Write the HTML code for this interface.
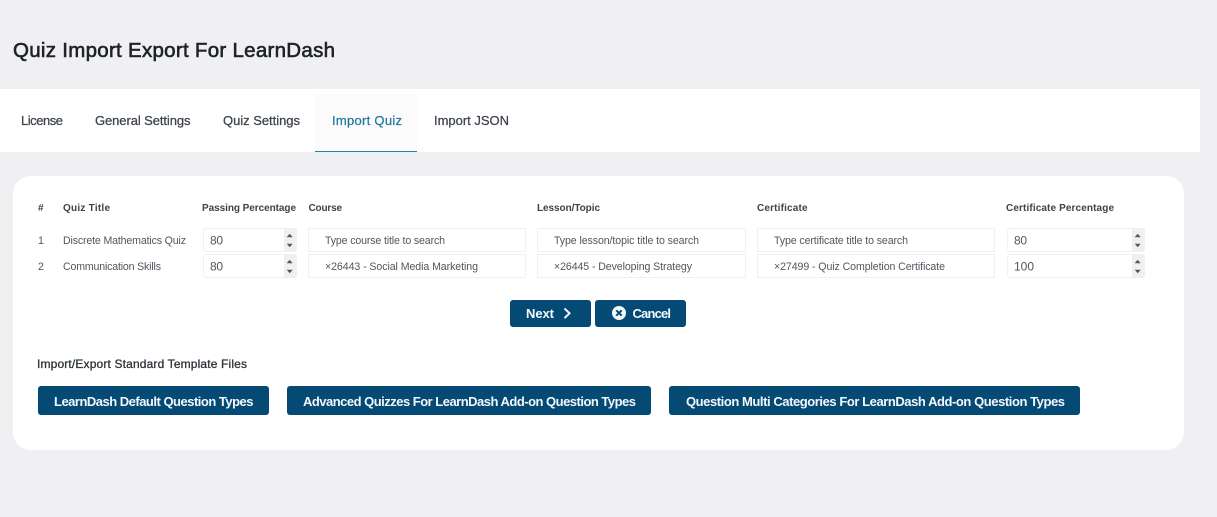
<!DOCTYPE html>
<html><head><meta charset="utf-8"><title>Quiz Import Export For LearnDash</title>
<style>
html,body{margin:0;padding:0;background:#f0f0f2;width:1217px;height:517px;overflow:hidden}
svg{display:block}
text{font-family:"Liberation Sans",sans-serif;white-space:pre}
.tab{font-size:13px;fill:#3c434a;stroke:#3c434a;stroke-width:.25}
.th{font-size:10px;font-weight:bold;fill:#3c434a}
.td{font-size:10.6px;fill:#50575e}
.num{font-size:12px;fill:#50575e}
.box{fill:#fff;stroke:#f0f0f2;stroke-width:1}
.spin{fill:#f0f0f2}
.ar{fill:#50575e}
.btn{fill:#044a75}
.bt{font-size:13px;font-weight:bold;fill:#f4f8fb}
</style></head><body>
<svg width="1217" height="517" viewBox="0 0 1217 517" xmlns="http://www.w3.org/2000/svg">
<rect width="1217" height="517" fill="#f0f0f2"/>
<text x="13" y="57" font-size="20.5" fill="#1d2327" stroke="#1d2327" stroke-width=".6" textLength="322" lengthAdjust="spacing">Quiz Import Export For LearnDash</text>

<rect x="0" y="89" width="1200" height="63" fill="#fff"/>
<rect x="315" y="94" width="102" height="58" fill="#fbfbfb"/>
<rect x="315" y="151" width="102" height="1" fill="#2a7fa8"/>
<text class="tab" x="21" y="125" textLength="42" lengthAdjust="spacing">License</text>
<text class="tab" x="95" y="125" textLength="95.500" lengthAdjust="spacing">General Settings</text>
<text class="tab" x="223" y="125" textLength="77" lengthAdjust="spacing">Quiz Settings</text>
<text class="tab" x="332" y="125" textLength="70" lengthAdjust="spacing" style="fill:#2278a3;stroke:#2278a3">Import Quiz</text>
<text class="tab" x="434" y="125" textLength="75" lengthAdjust="spacing">Import JSON</text>

<rect x="13" y="176" width="1171" height="274" rx="18" fill="#fff"/>

<text class="th" x="38" y="211" textLength="5.500" lengthAdjust="spacing">#</text>
<text class="th" x="63" y="211" textLength="47" lengthAdjust="spacing">Quiz Title</text>
<text class="th" x="202" y="211" textLength="94" lengthAdjust="spacing">Passing Percentage</text>
<text class="th" x="308.500" y="211" textLength="33.500" lengthAdjust="spacing">Course</text>
<text class="th" x="537" y="211" textLength="63" lengthAdjust="spacing">Lesson/Topic</text>
<text class="th" x="757" y="211" textLength="50.500" lengthAdjust="spacing">Certificate</text>
<text class="th" x="1006" y="211" textLength="108" lengthAdjust="spacing">Certificate Percentage</text>

<text class="td" x="38" y="244">1</text>
<text class="td" x="38" y="270">2</text>
<text class="td" x="63" y="244" textLength="123" lengthAdjust="spacing">Discrete Mathematics Quiz</text>
<text class="td" x="63" y="270" textLength="98" lengthAdjust="spacing">Communication Skills</text>

<rect class="box" x="203.500" y="228.500" width="93" height="23" rx="3"/>
<rect class="spin" x="284" y="229" width="13" height="22"/>
<path class="ar" d="M289.700 233.800l3 3.400h-6zM289.700 247.200l-3-3.400h6z"/>
<text class="num" x="210" y="244.500" textLength="13" lengthAdjust="spacing">80</text>
<rect class="box" x="203.500" y="254.500" width="93" height="23" rx="3"/>
<rect class="spin" x="284" y="255" width="13" height="22"/>
<path class="ar" d="M289.700 259.800l3 3.400h-6zM289.700 273.200l-3-3.400h6z"/>
<text class="num" x="210" y="270.500" textLength="13" lengthAdjust="spacing">80</text>

<rect class="box" x="308.500" y="228.500" width="217" height="23"/>
<rect class="box" x="308.500" y="254.500" width="217" height="23"/>
<text class="td" x="325" y="244" textLength="120" lengthAdjust="spacing">Type course title to search</text>
<text class="td" x="325" y="270" textLength="153" lengthAdjust="spacing">×26443 - Social Media Marketing</text>

<rect class="box" x="537.500" y="228.500" width="208" height="23"/>
<rect class="box" x="537.500" y="254.500" width="208" height="23"/>
<text class="td" x="554" y="244" textLength="145" lengthAdjust="spacing">Type lesson/topic title to search</text>
<text class="td" x="554" y="270" textLength="138" lengthAdjust="spacing">×26445 - Developing Strategy</text>

<rect class="box" x="757.500" y="228.500" width="237" height="23"/>
<rect class="box" x="757.500" y="254.500" width="237" height="23"/>
<text class="td" x="774" y="244" textLength="134" lengthAdjust="spacing">Type certificate title to search</text>
<text class="td" x="774" y="270" textLength="171" lengthAdjust="spacing">×27499 - Quiz Completion Certificate</text>

<rect class="box" x="1007.500" y="228.500" width="137" height="23" rx="3"/>
<rect class="spin" x="1132" y="229" width="13" height="22"/>
<path class="ar" d="M1137.700 233.800l3 3.400h-6zM1137.700 247.200l-3-3.400h6z"/>
<text class="num" x="1014" y="244.500" textLength="13" lengthAdjust="spacing">80</text>
<rect class="box" x="1007.500" y="254.500" width="137" height="23" rx="3"/>
<rect class="spin" x="1132" y="255" width="13" height="22"/>
<path class="ar" d="M1137.700 259.800l3 3.400h-6zM1137.700 273.200l-3-3.400h6z"/>
<text class="num" x="1014" y="270.500" textLength="20" lengthAdjust="spacing">100</text>

<rect class="btn" x="510" y="300" width="81" height="27" rx="3"/>
<text class="bt" x="526" y="318" textLength="28" lengthAdjust="spacing">Next</text>
<path d="M564.500 308.500l5 4.800-5 4.800" fill="none" stroke="#f4f8fb" stroke-width="2"/>
<rect class="btn" x="595" y="300" width="91" height="27" rx="3"/>
<circle cx="619" cy="313" r="7" fill="#f4f8fb"/>
<path d="M616.300 310.300l5.400 5.400M621.700 310.300l-5.400 5.400" stroke="#044a75" stroke-width="2"/>
<text class="bt" x="632.500" y="318" textLength="38.500" lengthAdjust="spacing">Cancel</text>

<text x="37" y="368" font-size="12" fill="#2c3338" stroke="#2c3338" stroke-width=".3" textLength="210" lengthAdjust="spacing">Import/Export Standard Template Files</text>

<rect class="btn" x="38" y="386" width="231" height="29" rx="3"/>
<text class="bt" x="54" y="406" textLength="199.500" lengthAdjust="spacing">LearnDash Default Question Types</text>
<rect class="btn" x="287" y="386" width="364" height="29" rx="3"/>
<text class="bt" x="303" y="406" textLength="333" lengthAdjust="spacing">Advanced Quizzes For LearnDash Add-on Question Types</text>
<rect class="btn" x="669" y="386" width="411" height="29" rx="3"/>
<text class="bt" x="686" y="406" textLength="379" lengthAdjust="spacing">Question Multi Categories For LearnDash Add-on Question Types</text>
</svg>
</body></html>
